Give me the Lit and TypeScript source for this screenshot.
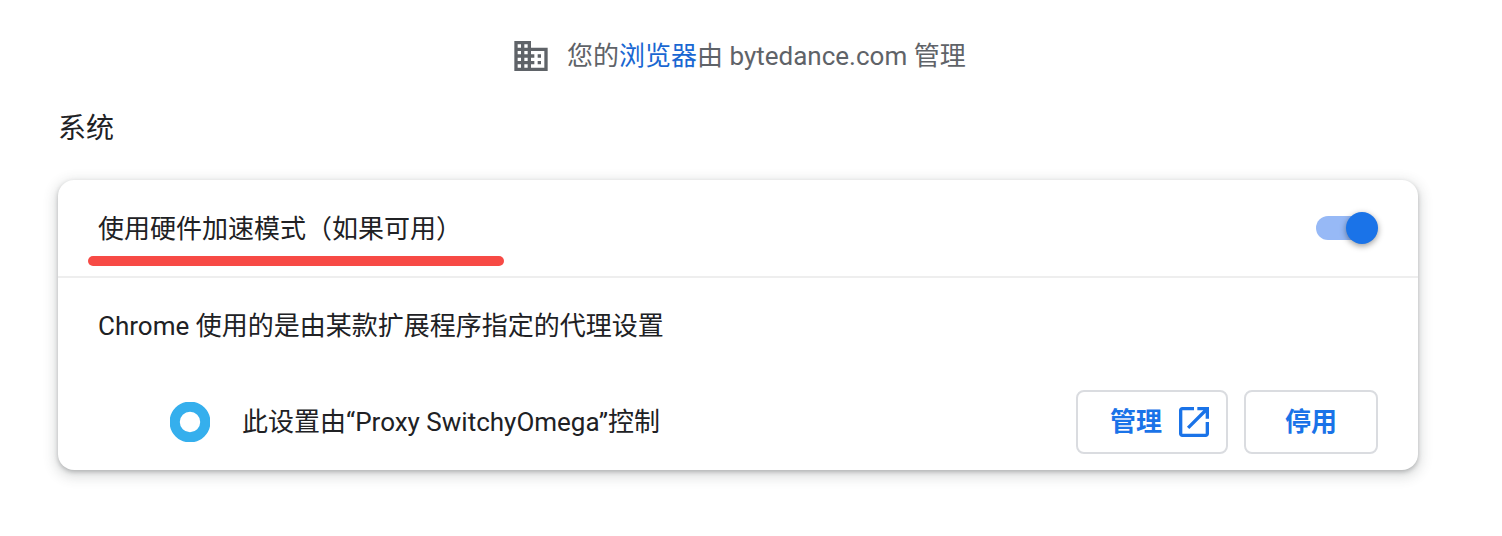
import { LitElement, html, css } from "lit";
import { customElement, state } from "lit/decorators.js";

@customElement("app-root")
export class AppRoot extends LitElement {
  @state() private accelerated = true;

  static styles = css`
    :host {
      display: block;
      box-sizing: border-box;
      height: 536px;
      overflow: hidden;
      background: #fff;
      color: #202124;
      font: 400 26px/40px Roboto, "Noto Sans CJK SC", sans-serif;
    }
    .managed {
      display: flex;
      align-items: center;
      gap: 16px;
      height: 40px;
      padding: 36px 0 0 511px;
      color: #5f6368;
      white-space: nowrap;
    }
    .icon {
      display: block;
      flex: none;
      width: 40px;
      height: 40px;
      fill: currentColor;
    }
    a {
      color: #1967d2;
      text-decoration: none;
    }
    h2 {
      margin: 0;
      padding: 33px 0 31px 58px;
      font-size: 28px;
      font-weight: 400;
      line-height: 40px;
    }
    .card {
      width: 1360px;
      height: 290px;
      margin-left: 58px;
      border-radius: 16px;
      box-shadow: 0 2px 4px rgba(60, 64, 67, 0.3), 0 4px 12px 4px rgba(60, 64, 67, 0.15);
    }
    .row {
      position: relative;
      box-sizing: border-box;
      display: flex;
      align-items: center;
      height: 96px;
      padding: 0 40px;
      white-space: nowrap;
    }
    .row.divided {
      height: 98px;
      border-top: 2px solid #eee;
    }
    .grow {
      flex: 1;
    }
    .label {
      padding-top: 2px;
    }
    .marker {
      position: absolute;
      left: 30px;
      top: 76px;
      width: 416px;
      height: 10px;
      border-radius: 5px;
      background: #f74a45;
    }
    .toggle {
      display: flex;
      align-items: center;
      justify-content: flex-end;
      width: 62px;
      height: 24px;
      padding: 0;
      border: 0;
      border-radius: 12px;
      background: linear-gradient(#97b9f6, #97b9f6) left / 52px 24px no-repeat;
    }
    .knob {
      width: 32px;
      height: 32px;
      flex: none;
      border-radius: 50%;
      background: #1a73e8;
      box-shadow: 0 2px 6px rgba(0, 0, 0, 0.4);
    }
    .extension {
      padding-left: 112px;
    }
    .logo {
      width: 40px;
      height: 40px;
      margin-right: 32px;
      flex: none;
    }
    .button {
      box-sizing: border-box;
      display: flex;
      align-items: center;
      justify-content: center;
      width: 134px;
      height: 64px;
      padding: 0;
      margin-left: 16px;
      border: 2px solid #dadce0;
      border-radius: 8px;
      background: #fff;
      color: #1a73e8;
      font: inherit;
      font-weight: 700;
    }
    .button.external {
      width: 152px;
      gap: 12px;
      padding-left: 20px;
    }
  `;

  render() {
    return html`
      <div class="managed">
        <svg class="icon" viewBox="0 0 24 24">
          <path d="M12 7V3H2v18h20V7H12zM6 19H4v-2h2v2zm0-4H4v-2h2v2zm0-4H4V9h2v2zm0-4H4V5h2v2zm4 12H8v-2h2v2zm0-4H8v-2h2v2zm0-4H8V9h2v2zm0-4H8V5h2v2zm10 12h-8v-2h2v-2h-2v-2h2v-2h-2V9h8v10zm-2-8h-2v2h2v-2zm0 4h-2v2h2v-2z" />
        </svg>
        <div>您的<a>浏览器</a>由 bytedance.com 管理</div>
      </div>
      <h2>系统</h2>
      <div class="card">
        <div class="row">
          <div class="grow label">使用硬件加速模式（如果可用）</div>
          <button
            class="toggle"
            role="switch"
            aria-checked=${this.accelerated}
            @click=${() => (this.accelerated = !this.accelerated)}
          >
            <span class="knob"></span>
          </button>
          <div class="marker"></div>
        </div>
        <div class="row divided"><div>Chrome 使用的是由某款扩展程序指定的代理设置</div></div>
        <div class="row extension">
          <svg class="logo" viewBox="0 0 40 40">
            <circle cx="20" cy="20" r="15.3" fill="none" stroke="#35afed" stroke-width="10.2" />
          </svg>
          <div class="grow">此设置由“Proxy SwitchyOmega”控制</div>
          <button class="button external">
            管理
            <svg class="icon" viewBox="0 0 24 24">
              <path d="M19 19H5V5h7V3H5c-1.11 0-2 .9-2 2v14c0 1.1.89 2 2 2h14c1.1 0 2-.9 2-2v-7h-2v7zM14 3v2h3.59l-9.83 9.83 1.41 1.41L19 6.41V10h2V3h-7z" />
            </svg>
          </button>
          <button class="button">停用</button>
        </div>
      </div>
    `;
  }
}
